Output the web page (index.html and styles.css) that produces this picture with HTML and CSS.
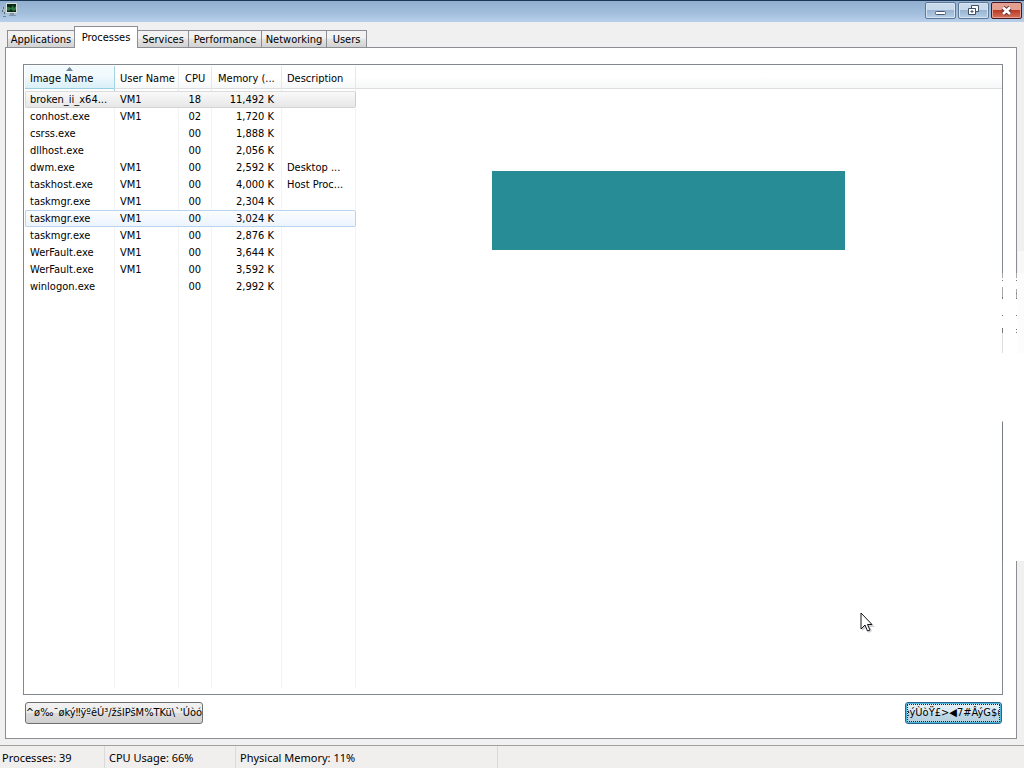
FILE: index.html
```html
<!DOCTYPE html>
<html lang="en">
<head>
<meta charset="utf-8">
<title>Task Manager</title>
<link rel="stylesheet" href="styles.css">
</head>
<body>
<div class="window">
  <header class="titlebar">
    <svg class="app-icon" width="16" height="16" viewBox="0 0 16 16" aria-hidden="true">
      <path d="M0 5h3v8H0z" fill="#a9bccb"/><path d="M1 5h1v2H1zM0 8h1v2H0zM2 10h1v2H2z" fill="#536c78"/>
      <path d="M4 1h11v10H4z" fill="#d5ded8"/><path d="M5 2h9v8H5z" fill="#082812"/>
      <path d="M5 5h2l2 1 2-3 1 3 2-2v4l-3 1-2-2-2 2-2-1z" fill="#2d7544"/>
      <path d="M8 11h4v2H8zM7 13h7v1H7z" fill="#8496a5"/><path d="M1 14h3v1H1z" fill="#6c8395"/>
    </svg>
    <div class="caption-buttons">
      <button class="caption" type="button" aria-label="Minimize"><svg width="29" height="15" viewBox="0 0 29 15"><rect x="9.5" y="8.5" width="10" height="3" rx="1" fill="#fff" stroke="#45566f"/></svg></button>
      <button class="caption" type="button" aria-label="Restore"><svg width="29" height="15" viewBox="0 0 29 15"><path d="M12.5 2.500h7v6h-7z" fill="#fff" stroke="#3f5069"/><path d="M15 5h2v1h-2z" fill="#6580a5"/><path d="M9.500 5.500h7v6h-7z" fill="#fff" stroke="#3f5069"/><path d="M12 8h2v1h-2z" fill="#7e98b8" stroke="#3f5069"/></svg></button>
      <button class="caption close" type="button" aria-label="Close"><svg width="29" height="15" viewBox="0 0 29 15"><path d="M11 4.500l7 6.500M18 4.500l-7 6.500" stroke="#683238" stroke-width="4.500"/><path d="M11 4.500l7 6.500M18 4.500l-7 6.500" stroke="#fff" stroke-width="2.600"/></svg></button>
    </div>
  </header>

  <main class="content">
    <nav class="tabs" role="tablist">
      <button class="tab" type="button" role="tab">Applications</button>
      <button class="tab active" type="button" role="tab" aria-selected="true">Processes</button>
      <button class="tab" type="button" role="tab">Services</button>
      <button class="tab" type="button" role="tab">Performance</button>
      <button class="tab" type="button" role="tab">Networking</button>
      <button class="tab" type="button" role="tab">Users</button>
    </nav>
    <section class="panel">
      <div class="list">
        <table class="processes">
          <colgroup><col class="c-image"><col class="c-user"><col class="c-cpu"><col class="c-memory"><col class="c-desc"><col></colgroup>
          <thead>
            <tr><th class="sorted">Image Name<svg class="sort" width="7" height="4" viewBox="0 0 7 4" aria-hidden="true"><path d="M0 4l3.500-4L7 4z" fill="#6d8795"/></svg></th><th>User Name</th><th>CPU</th><th>Memory (...</th><th>Description</th><th></th></tr>
          </thead>
          <tbody>
            <tr class="inactive"><td>broken_ii_x64...</td><td>VM1</td><td>18</td><td>11,492 K</td><td></td><td></td></tr>
            <tr><td>conhost.exe</td><td>VM1</td><td>02</td><td>1,720 K</td><td></td><td></td></tr>
            <tr><td>csrss.exe</td><td></td><td>00</td><td>1,888 K</td><td></td><td></td></tr>
            <tr><td>dllhost.exe</td><td></td><td>00</td><td>2,056 K</td><td></td><td></td></tr>
            <tr><td>dwm.exe</td><td>VM1</td><td>00</td><td>2,592 K</td><td>Desktop ...</td><td></td></tr>
            <tr><td>taskhost.exe</td><td>VM1</td><td>00</td><td>4,000 K</td><td>Host Proc...</td><td></td></tr>
            <tr><td>taskmgr.exe</td><td>VM1</td><td>00</td><td>2,304 K</td><td></td><td></td></tr>
            <tr class="hover"><td>taskmgr.exe</td><td>VM1</td><td>00</td><td>3,024 K</td><td></td><td></td></tr>
            <tr><td>taskmgr.exe</td><td>VM1</td><td>00</td><td>2,876 K</td><td></td><td></td></tr>
            <tr><td>WerFault.exe</td><td>VM1</td><td>00</td><td>3,644 K</td><td></td><td></td></tr>
            <tr><td>WerFault.exe</td><td>VM1</td><td>00</td><td>3,592 K</td><td></td><td></td></tr>
            <tr><td>winlogon.exe</td><td></td><td>00</td><td>2,992 K</td><td></td><td></td></tr>
            <tr class="filler"><td></td><td></td><td></td><td></td><td></td><td></td></tr>
          </tbody>
        </table>
      </div>
      <div class="actions">
        <button class="action all-users" type="button"><span>^ø‰¯øký‼ÿºêÚ³/žšlPšM%TKü\`'Úòó</span></button>
        <button class="action end-process" type="button"><span>éýÙòŸ£&gt;◀7#ÂýG$ú</span></button>
      </div>
    </section>
  </main>

  <footer class="statusbar">
    <div class="status s-proc">Processes: 39</div>
    <div class="status s-cpu">CPU Usage: 66%</div>
    <div class="status s-mem">Physical Memory: 11%</div>
  </footer>

  <div class="block"></div>
  <svg class="erased" width="23" height="310" viewBox="0 0 23 310" aria-hidden="true">
    <path d="M0 22h23v288H0z" fill="#fff"/>
    <path d="M17 0h6v22h-6z" fill="#f8f8f8"/><path d="M17 22h6v80h-6z" fill="#fcfcfc"/>
    <path d="M1.500 22v5M15.500 22v5M1.500 36v12M15.500 38v10" stroke="#aaa"/>
    <path d="M1 29h1v1H1zM15 29h1v1h-1zM1 46h1v2H1zM15 42h1v1h-1zM15 47h1v1h-1zM1 64h1v1H1zM15 64h1v1h-1zM1 77h1v5H1zM15 78h1v1h-1zM15 81h1v1h-1z" fill="#777"/>
    <path d="M1.500 82v20" stroke="#ddd"/><path d="M1.500 170.500V310" stroke="#777b82"/>
  </svg>
  <svg class="pointer" width="16" height="22" viewBox="0 0 16 22" aria-hidden="true">
    <path d="M2 2v17l4-3 3 5 3-2-2-4h5z" fill="#000" opacity=".18"/>
    <path d="M1 1v16l4-4 2.500 6 2.500-1-2.500-5.500H12z" fill="#fff" stroke="#15151f"/>
  </svg>
</div>
</body>
</html>
```
FILE: styles.css
```css
* { box-sizing: border-box; }
body {
  margin: 0;
  font: 11px/16px "DejaVu Sans Condensed", "Noto Sans", sans-serif;
  color: #000;
}
button { font: inherit; color: inherit; margin: 0; padding: 0; }

.window {
  position: relative;
  display: flex;
  flex-direction: column;
  min-height: 100vh;
  background: #f0f0f0;
  overflow: hidden;
}

.titlebar {
  display: flex;
  justify-content: space-between;
  height: 22px;
  padding: 1px 2px 0 2px;
  border-top: 1px solid #1c3654;
  background: linear-gradient(#91afd0, #a3bfdd 60%, #b9d0ea);
}
.app-icon { display: block; }
.caption-buttons { display: flex; gap: 2px; }
.caption {
  width: 31px;
  height: 17px;
  border: 1px solid #5d7796;
  border-radius: 2px;
  background: linear-gradient(#c8d9ec 45%, #98b4d2 50%, #b8cfe6);
  box-shadow: inset 0 0 0 1px #d5e4f3;
}
.caption svg { display: block; }
.caption.close {
  border-color: #4a1720;
  background: linear-gradient(#e3a090 45%, #bd3a26 50%, #d5735c);
  box-shadow: inset 0 0 0 1px #e5a193;
}

.content {
  flex: 1;
  display: flex;
  flex-direction: column;
  padding: 4px 7px 6px 5px;
}
.tabs {
  display: grid;
  grid-template-columns: 67px 64px 51px 73px 65px 40px;
  align-items: end;
  height: 22px;
  padding-left: 2px;
  margin-bottom: -1px;
  z-index: 1;
}
.tab {
  height: 18px;
  padding-top: 1px;
  border: 1px solid #8b8f94;
  border-left-width: 0;
  background: linear-gradient(#f2f2f2 45%, #e4e4e4 50%, #d2d2d2);
  line-height: 15px;
  white-space: nowrap;
}
.tab:first-child { border-left-width: 1px; border-right-width: 0; }
.tab.active {
  height: 22px;
  padding: 0 0 1px;
  border-left-width: 1px;
  border-bottom: 0;
  background: #fff;
}

.panel {
  flex: 1;
  display: flex;
  flex-direction: column;
  padding: 16px 13px 14px 17px;
  border: 1px solid #8b8f94;
  background: #fff;
}
.list {
  flex: 1;
  display: flex;
  padding: 1px 0 6px 1px;
  border: 1px solid #828790;
}
.processes {
  width: 100%;
  table-layout: fixed;
  border-collapse: separate;
  border-spacing: 0;
}
.c-image { width: 90px; }
.c-user { width: 64px; }
.c-cpu { width: 33px; }
.c-memory { width: 70px; }
.c-desc { width: 74px; }

.processes th {
  position: relative;
  height: 25px;
  padding: 0 0 0 5px;
  border-right: 1px solid #e6e9ec;
  background: linear-gradient(#fff 50%, #f6f7f8) 0 0 / 100% 22px no-repeat, linear-gradient(#dcdfe2, #dcdfe2) 0 22px / 100% 1px no-repeat;
  font-weight: normal;
  text-align: left;
  white-space: nowrap;
}
.processes th:nth-child(3), .processes th:nth-child(4) { padding-left: 6px; }
.processes th:last-child { border-right: 0; }
.processes th.sorted {
  border-right-color: #a5d5e5;
  background: linear-gradient(#f3fafd 40%, #d9f0f8) 0 0 / 100% 22px no-repeat, linear-gradient(#99cfe0, #99cfe0) 0 22px / 100% 1px no-repeat;
}
.sort { position: absolute; top: 1px; left: 41px; }

.processes td {
  height: 17px;
  padding: 0 0 0 5px;
  border-right: 1px solid #f3f3f5;
  line-height: 15px;
  white-space: nowrap;
}
.processes td:nth-child(3) { padding: 0 10px 0 0; text-align: right; }
.processes td:nth-child(4) { padding: 0 7px 0 0; text-align: right; }
.processes td:last-child { border-right: 0; }
.processes .filler td { height: auto; }

.inactive td:not(:last-child) {
  border-top: 1px solid #dcdcdc;
  border-bottom: 1px solid #d4d4d4;
  background: linear-gradient(#f9f9f9, #e7e7e7);
}
.hover td:not(:last-child) {
  border-top: 1px solid #b9d4ee;
  border-bottom: 1px solid #b9d4ee;
  background: linear-gradient(#fbfdff, #ecf4fd);
}
.inactive td:nth-child(-n+4), .hover td:nth-child(-n+4) { border-right-width: 0; }
.processes .inactive td:nth-child(3), .processes .hover td:nth-child(3) { padding-right: 11px; }
.processes .inactive td:nth-child(4), .processes .hover td:nth-child(4) { padding-right: 8px; }
.processes .inactive td:first-child { border-left: 1px solid #dcdcdc; padding-left: 4px; border-radius: 2px 0 0 2px; }
.processes .hover td:first-child { border-left: 1px solid #b9d4ee; padding-left: 4px; border-radius: 2px 0 0 2px; }
.processes .inactive td:nth-child(5) { border-right: 1px solid #cdcdcd; border-radius: 0 2px 2px 0; }
.processes .hover td:nth-child(5) { border-right: 1px solid #b9d4ee; border-radius: 0 2px 2px 0; }

.actions {
  display: flex;
  justify-content: space-between;
  padding: 7px 1px 0 2px;
}
.action {
  display: flex;
  align-items: center;
  justify-content: center;
  height: 22px;
  border: 1px solid #707070;
  border-radius: 3px;
  background: linear-gradient(#f2f2f2, #ebebeb 48%, #dcdcdc 50%, #cfcfcf);
  white-space: nowrap;
  overflow: hidden;
}
.all-users { width: 178px; }
.end-process {
  width: 97px;
  border-color: #2c628b;
  background: linear-gradient(#e4f0f7, #d8e8f1 48%, #c2d9e6 50%, #b4cfdf);
  box-shadow: inset 0 0 0 1px #48b8de;
  outline: 1px dotted #222;
  outline-offset: -3px;
}
.end-process span {
  display: flex;
  justify-content: center;
  width: 91px;
  overflow: hidden;
}

.statusbar {
  display: flex;
  height: 23px;
  border-top: 1px solid #a0a0a0;
  background: #f1eeee;
  font: 11px/24px "Noto Sans", sans-serif;
}
.status {
  padding-left: 4px;
  border-right: 1px solid #dadada;
  white-space: nowrap;
}
.s-proc { width: 105px; padding-left: 2px; }
.s-cpu { width: 131px; }
.s-mem { width: 262px; }

.block {
  position: absolute;
  left: 492px;
  top: 171px;
  width: 353px;
  height: 79px;
  background: #278c96;
}
.erased { position: absolute; right: 0; top: 251px; }
.pointer { position: absolute; left: 860px; top: 612px; }
```
